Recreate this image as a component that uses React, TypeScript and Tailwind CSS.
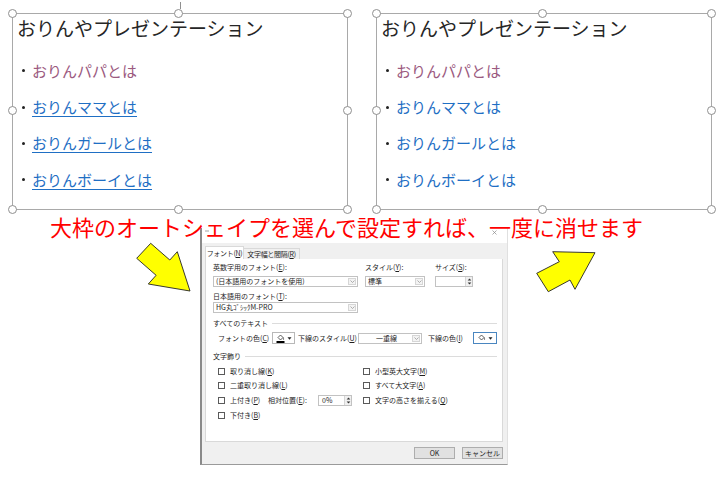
import React from 'react';

const jp = { fontFamily: '"Noto Sans CJK JP", "Noto Sans", sans-serif' };

const Handle = ({ className }: { className: string }) => (
  <span className={`absolute w-[9px] h-[9px] rounded-full bg-white border-[1.5px] border-[#8f8f8f] ${className}`} />
);

const items = ['おりんパパとは', 'おりんママとは', 'おりんガールとは', 'おりんボーイとは'];

const TextBox = ({ underline, rotate }: { underline: boolean; rotate?: boolean }) => (
  <div className="relative w-[336px] h-[197px] border-[1.5px] border-[#a9a9a9] pl-[4px] pt-[2px]">
    {rotate && <span className="absolute left-1/2 -top-[12px] w-px h-[7px] bg-[#8f8f8f]" />}
    <Handle className="-left-[5px] -top-[5px]" />
    <Handle className="left-[161px] -top-[5px]" />
    <Handle className="-right-[5px] -top-[5px]" />
    <Handle className="-left-[5px] top-[92px]" />
    <Handle className="-right-[5px] top-[92px]" />
    <Handle className="-left-[5px] -bottom-[5px]" />
    <Handle className="left-[161px] -bottom-[5px]" />
    <Handle className="-right-[5px] -bottom-[5px]" />
    <div className="text-[19px] leading-[24px] text-[#262626]">おりんやプレゼンテーション</div>
    <ul className="mt-[12.5px]">
      {items.map((t, i) => (
        <li key={t} className="flex items-center h-[36.4px] pl-[5px]">
          <span className="w-[3px] h-[3px] rounded-full bg-[#222]" />
          <span
            className={`ml-[7px] text-[15px] leading-[20px] ${i === 0 ? 'text-[#9b5a80]' : 'text-[#1f6fc4]'} ${
              underline && i > 0 ? 'underline underline-offset-[3px] decoration-1' : ''
            }`}
          >
            {t}
          </span>
        </li>
      ))}
    </ul>
  </div>
);

const K = ({ k }: { k: string }) => (
  <>
    (<span className="underline">{k}</span>)
  </>
);

const Chevron = () => (
  <svg width="5" height="3" viewBox="0 0 5 3">
    <path d="M0.5 0.5 L2.5 2.5 L4.5 0.5" fill="none" stroke="#9a9a9a" strokeWidth="0.8" />
  </svg>
);

const Select = ({ className, text, center }: { className: string; text: string; center?: boolean }) => (
  <div className={`flex h-[11px] bg-white border border-[#c2c2c2] ${className}`}>
    <span className={`flex-1 pl-[2px] text-[7px] leading-[9px] whitespace-nowrap ${center ? 'text-center' : ''}`}>{text}</span>
    <span className="w-[8px] my-[1px] mr-[1px] border border-[#d6d6d6] bg-[#f3f3f3] flex items-center justify-center">
      <Chevron />
    </span>
  </div>
);

const Spin = ({ className, text }: { className: string; text: string }) => (
  <div className={`flex h-[11px] bg-white border border-[#c2c2c2] ${className}`}>
    <span className="flex-1 pl-[3px] text-[7px] leading-[9px]">{text}</span>
    <span className="w-[7px] flex items-center justify-center bg-[#f0f0f0] border-l border-[#d6d6d6]">
      <svg width="5" height="7" viewBox="0 0 5 7">
        <path d="M2.5 0.5 L4.3 2.6 L0.7 2.6 Z" fill="#333" />
        <path d="M2.5 6.5 L4.3 4.4 L0.7 4.4 Z" fill="#333" />
      </svg>
    </span>
  </div>
);

const Box = () => <span className="w-[7px] h-[7px] border border-[#5a5a5a] bg-white shrink-0" />;

const Check = ({ children, className = '' }: { children: React.ReactNode; className?: string }) => (
  <div className={`flex items-center h-[10px] whitespace-nowrap ${className}`}>
    <Box />
    <span className="ml-[5px] text-[7px] leading-[9px]">{children}</span>
  </div>
);

const Bucket = ({ bar }: { bar: boolean }) => (
  <svg width="9" height="9" viewBox="0 0 9 9">
    <path d="M2 3.5 L4.5 1 L7 3.5 L4.5 6 Z" fill="white" stroke="#333" strokeWidth="0.8" />
    <path d="M7 3.5 Q8 5 7.5 5.8" fill="none" stroke="#333" strokeWidth="0.7" />
    {bar && <rect x="0.5" y="7" width="8" height="2" fill="#000" />}
  </svg>
);

const DropTri = () => (
  <svg width="5" height="3" viewBox="0 0 5 3">
    <path d="M0.5 0.3 L4.5 0.3 L2.5 2.7 Z" fill="#222" />
  </svg>
);

const Dialog = () => (
  <div className="w-[308px] h-[237px] flex flex-col border-l-2 border-b border-r border-l-[#8a8a8a] border-b-[#9a9a9a] border-r-[#e0e0e0] text-[#1e1e1e] whitespace-nowrap">
    <div className="h-[15px] bg-white flex justify-between items-start pl-[3px] pr-[10px]">
      <svg width="4" height="4" viewBox="0 0 4 4" className="mt-[1px]">
        <path d="M0 2 L4 2" stroke="#8a8a8a" strokeWidth="0.8" />
      </svg>
      <svg width="5" height="5" viewBox="0 0 5 5" className="mt-[2px]">
        <path d="M0.5 0.5 L4.5 4.5 M4.5 0.5 L0.5 4.5" stroke="#8a8a8a" strokeWidth="0.7" />
      </svg>
    </div>
    <div className="flex-1 bg-[#f0f0f0] pl-[3px] pr-[4px] pt-[3px] flex flex-col">
      <div className="flex items-end h-[13px] text-[7px] leading-[9px] tracking-[-0.3px]">
        <span className="h-[13px] w-[39px] bg-white border border-b-0 border-[#d9d9d9] flex items-center justify-center">
          フォント<K k="N" />
        </span>
        <span className="h-[11px] w-[56px] bg-[#f0f0f0] border border-l-0 border-b-0 border-[#d9d9d9] flex items-center justify-center">
          文字幅と間隔<K k="R" />
        </span>
      </div>
      <div className="h-[183px] bg-white border border-t-0 border-[#d9d9d9] pl-[7px] pr-[5px] pt-[3px] text-[7px] leading-[10px]">
        <div className="flex h-[10px]">
          <span className="w-[152px]">英数字用のフォント<K k="E" />:</span>
          <span className="w-[70px]">スタイル<K k="Y" />:</span>
          <span>サイズ<K k="S" />:</span>
        </div>
        <div className="flex mt-[4px]">
          <Select className="w-[145px]" text="(日本語用のフォントを使用)" />
          <Select className="w-[60px] ml-[7px]" text="標準" />
          <Spin className="w-[38px] ml-[10px]" text="" />
        </div>
        <div className="mt-[4px] h-[10px]">
          日本語用のフォント<K k="T" />:
        </div>
        <div className="mt-[1px]">
          <Select className="w-[145px]" text="HG丸ｺﾞｼｯｸM-PRO" />
        </div>
        <div className="mt-[5px] h-[10px] flex items-center">
          <span>すべてのテキスト</span>
          <span className="flex-1 ml-[4px] h-px bg-[#dcdcdc]" />
        </div>
        <div className="mt-[4px] h-[12px] flex items-center pl-[5px]">
          <span className="w-[54px]">フォントの色<K k="C" /></span>
          <span className="w-[23px] h-[12px] bg-white border border-[#b8b8b8] flex items-center justify-center gap-[2px]">
            <Bucket bar />
            <DropTri />
          </span>
          <span className="ml-[3px] w-[60px]">下線のスタイル<K k="U" /></span>
          <Select className="w-[64px]" text="一重線" center />
          <span className="ml-[6px] w-[45px]">下線の色<K k="I" /></span>
          <span className="w-[24px] h-[12px] bg-white border border-[#4a86c0] flex items-center justify-center gap-[2px]">
            <Bucket bar={false} />
            <DropTri />
          </span>
        </div>
        <div className="mt-[7px] h-[10px] flex items-center">
          <span>文字飾り</span>
          <span className="flex-1 ml-[4px] h-px bg-[#dcdcdc]" />
        </div>
        <div className="mt-[5px] pl-[5px] grid grid-cols-[145px_1fr] gap-y-[4.7px]">
          <Check>取り消し線<K k="K" /></Check>
          <Check>小型英大文字<K k="M" /></Check>
          <Check>二重取り消し線<K k="L" /></Check>
          <Check>すべて大文字<K k="A" /></Check>
          <div className="flex items-center h-[10px]">
            <Check className="w-[50px]">上付き<K k="P" /></Check>
            <span className="text-[7px] leading-[9px] w-[50px]">相対位置<K k="E" />:</span>
            <Spin className="w-[34px]" text="0%" />
          </div>
          <Check>文字の高さを揃える<K k="Q" /></Check>
          <Check>下付き<K k="B" /></Check>
        </div>
      </div>
      <div className="mt-[5px] flex justify-end gap-[7px] text-[7px] leading-[10px]">
        <span className="w-[41px] h-[12px] bg-[#e1e1e1] border border-[#adadad] flex items-center justify-center">OK</span>
        <span className="w-[41px] h-[12px] bg-[#e1e1e1] border border-[#adadad] flex items-center justify-center">キャンセル</span>
      </div>
    </div>
  </div>
);

const App = () => {
  return (
    <div className="w-[727px] h-[477px] bg-white overflow-hidden" style={jp}>
      <div className="flex pt-[13px] pl-[12px] gap-[28px]">
        <TextBox underline rotate />
        <TextBox underline={false} />
      </div>
      <div className="relative z-10 mt-[5px] pl-[50px] text-[22px] leading-[22px] text-[#ff0000] whitespace-nowrap">
        大枠のオートシェイプを選んで設定すれば、一度に消せます
      </div>
      <div className="flex items-start mt-[-9px] pl-[130px]">
        <svg width="65" height="58" viewBox="0 0 65 58" className="mt-[10px]">
          <polygon
            points="6.7,20.3 20.7,5.3 39.8,22 47.3,13.7 60,53 18.3,46 26.1,37.3"
            fill="#ffff00"
            stroke="#222"
            strokeWidth="0.9"
          />
        </svg>
        <div className="ml-[5px]">
          <Dialog />
        </div>
        <svg width="70" height="50" viewBox="0 0 70 50" className="ml-[22px] mt-[18px]">
          <polygon
            points="65,6.7 22.7,5.7 29.3,15.7 6.7,27.3 18.3,45.7 40,34 45,43.3"
            fill="#ffff00"
            stroke="#222"
            strokeWidth="0.9"
          />
        </svg>
      </div>
    </div>
  );
};

export default App;
